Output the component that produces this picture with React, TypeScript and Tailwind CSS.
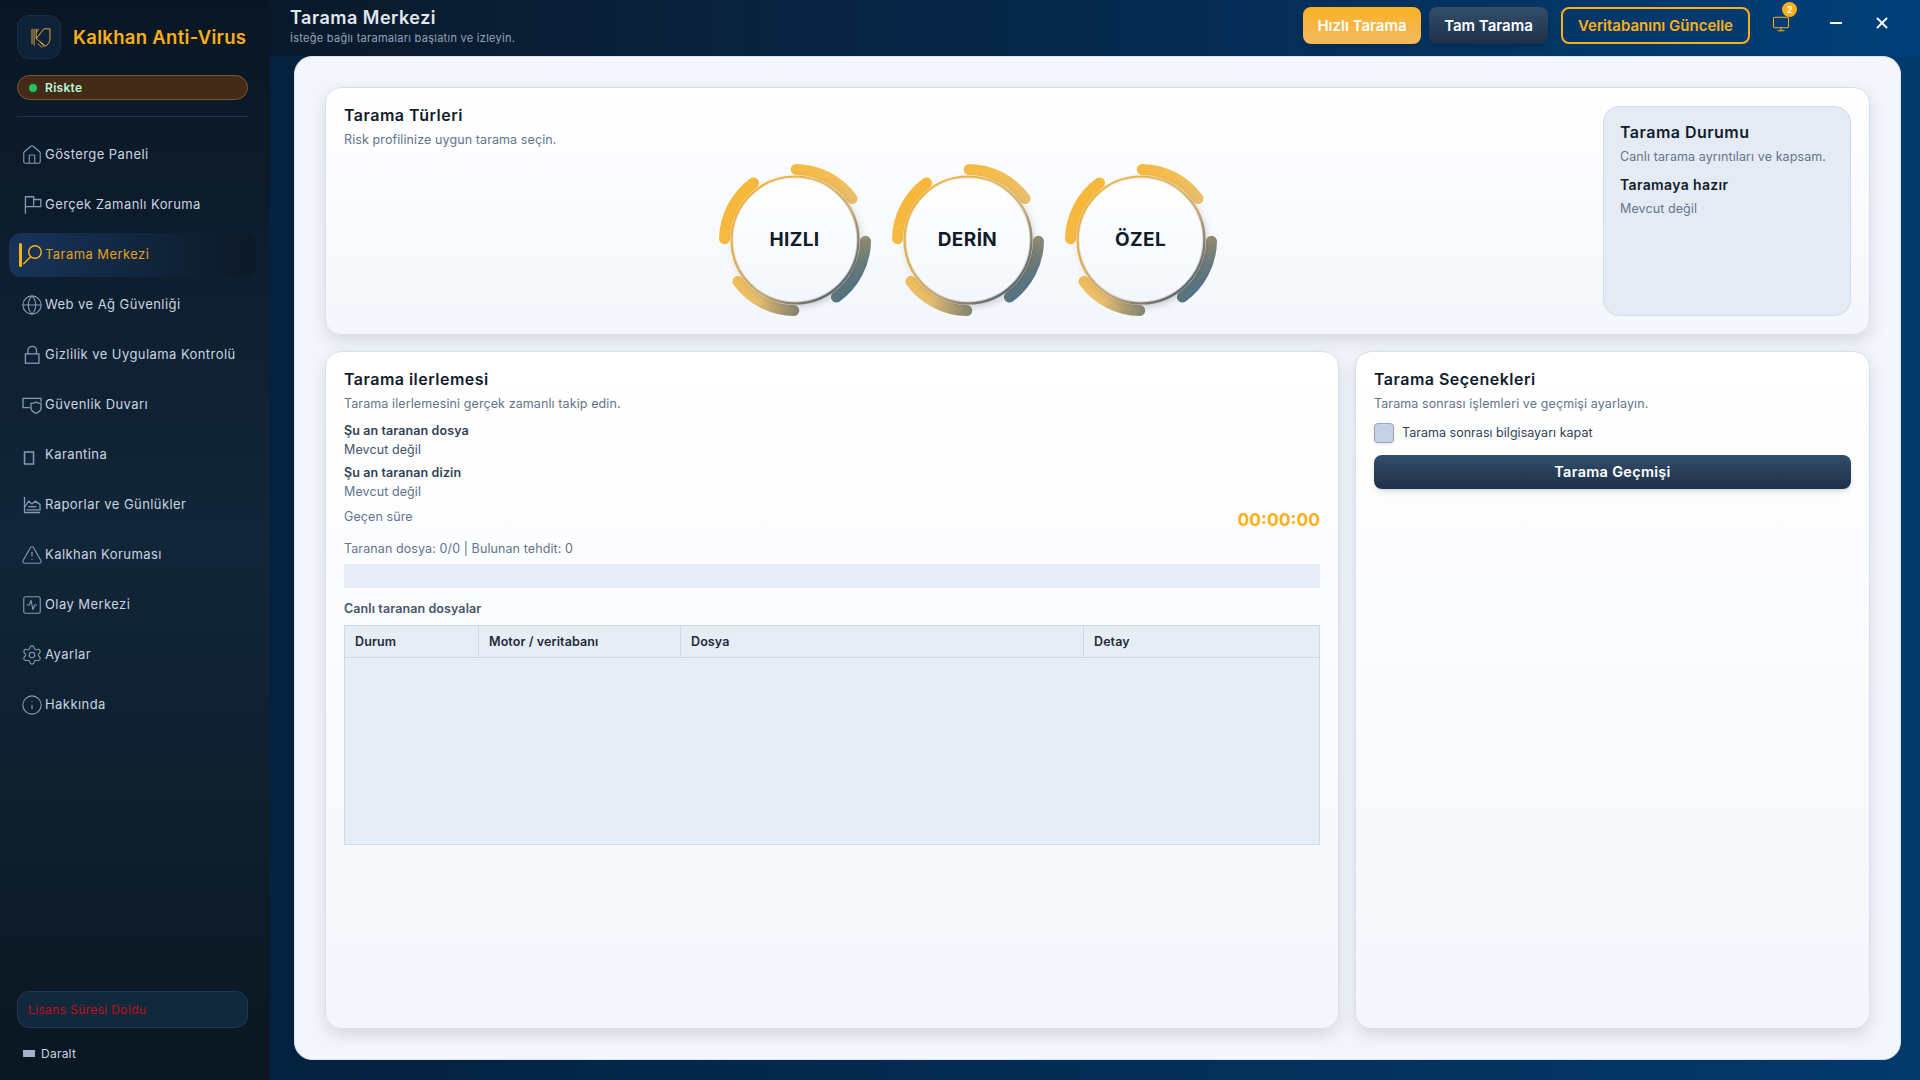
import { Globe, House, Info, Minus, Monitor, Settings, SquareActivity, TriangleAlert, X } from "lucide-react";
import type { ReactNode } from "react";

const iconClass = "size-[22px] shrink-0 text-[#8499b5]";

const FlagIcon = () => (
  <svg viewBox="0 0 20 20" fill="none" stroke="currentColor" strokeWidth="1.2" className={iconClass}>
    <path d="M4 18V2M4 2.500h7.500v9H4M11.500 5H18v6.500h-6.500" />
  </svg>
);

const LockIcon = () => (
  <svg viewBox="0 0 20 20" fill="none" stroke="currentColor" strokeWidth="1.2" className={iconClass}>
    <rect x="4" y="9" width="12.300" height="8.500" />
    <path d="M6.300 9V6a3.900 3.900 0 0 1 7.800 0v3" />
  </svg>
);

const WallIcon = () => (
  <svg viewBox="0 0 20 20" fill="none" stroke="currentColor" strokeWidth="1.2" className={iconClass}>
    <path d="M8 12.400H1.800V4h16.400v3" />
    <path d="M13.600 7.300c1.200.9 2.800 1.300 4.600 1.300v4c0 2.400-1.800 4-4.600 5-2.800-1-4.500-2.600-4.500-5v-4c1.800 0 3.300-.4 4.500-1.300z" />
  </svg>
);

const BoxIcon = () => (
  <svg viewBox="0 0 20 20" fill="none" stroke="currentColor" strokeWidth="1.4" className={iconClass}>
    <rect x="3.200" y="7.300" width="8.200" height="10.900" />
  </svg>
);

const ChartIcon = () => (
  <svg viewBox="0 0 20 20" fill="none" stroke="currentColor" strokeWidth="1.2" className={iconClass}>
    <path d="M3.200 2.700v14.100h14.100" />
    <path d="M3.200 12L7 6.500l3 2.500 3-2.500 4.300 3v5H5" />
    <path d="M6.500 11.500h7.500" />
  </svg>
);

const ActiveSearch = () => (
  <svg viewBox="0 0 20 20" fill="none" stroke="#fbb017" strokeWidth="1.3" className="size-[22px] shrink-0">
    <circle cx="12.700" cy="7.300" r="5.700" />
    <path d="M8.700 11.500L2 18.500" />
  </svg>
);

const navItems: { label: string; icon: ReactNode; active?: boolean }[] = [
  { label: "Gösterge Paneli", icon: <House strokeWidth={1.2} className={iconClass} /> },
  { label: "Gerçek Zamanlı Koruma", icon: <FlagIcon /> },
  { label: "Tarama Merkezi", icon: <ActiveSearch />, active: true },
  { label: "Web ve Ağ Güvenliği", icon: <Globe strokeWidth={1.2} className={iconClass} /> },
  { label: "Gizlilik ve Uygulama Kontrolü", icon: <LockIcon /> },
  { label: "Güvenlik Duvarı", icon: <WallIcon /> },
  { label: "Karantina", icon: <BoxIcon /> },
  { label: "Raporlar ve Günlükler", icon: <ChartIcon /> },
  { label: "Kalkhan Koruması", icon: <TriangleAlert strokeWidth={1.2} className={iconClass} /> },
  { label: "Olay Merkezi", icon: <SquareActivity strokeWidth={1.2} className={iconClass} /> },
  { label: "Ayarlar", icon: <Settings strokeWidth={1.2} className={iconClass} /> },
  { label: "Hakkında", icon: <Info strokeWidth={1.2} className={iconClass} /> },
];

const Logo = () => (
  <svg viewBox="0 0 24 24" fill="none" stroke="#fbb93f" strokeWidth="0.75" className="size-7">
    <path d="M6 5v13M7.800 5v14.500M9.600 5v8.500M9.600 13.500L16.100 5h5.300v8.500c0 2.500-1.400 4.500-3.500 6.300M9.600 13.500l8.300 6.300" />
    <path d="M11.800 5L9.600 8M13 16l3.500 4.500M11 17.500l3.500 3.500" />
  </svg>
);

const NavRow = ({ label, icon, active }: { label: string; icon: ReactNode; active?: boolean }) => (
  <div
    className={
      active
        ? "flex h-11 items-center rounded-xl bg-gradient-to-r from-[#17345a] to-[#0c1926] pl-[10px] text-[#e4a11c]"
        : "flex h-11 items-center rounded-xl pl-3 text-[#cbd5e1]"
    }
  >
    {active && <span className="-mr-px h-6 w-[3px] rounded-sm bg-[#fbb017]" />}
    {icon}
    <span className="ml-[2px] text-[13px] tracking-[0.033em]">{label}</span>
  </div>
);

const Sidebar = () => (
  <aside className="flex w-[270px] shrink-0 flex-col bg-gradient-to-b from-[#0a1624] via-[#112639] to-[#0b1722] pr-[14px] pl-[9px]">
    <div className="mx-2 mt-[15px] flex items-center gap-3">
      <div className="flex size-11 items-center justify-center rounded-xl border border-[#173049] bg-[#0e2338]">
        <Logo />
      </div>
      <span className="text-[18.500px] leading-none font-semibold tracking-[0.016em] whitespace-nowrap text-[#fbb017]">Kalkhan Anti-Virus</span>
    </div>
    <div className="mx-2 mt-4 flex h-[25px] items-center rounded-full border border-[#7a5a35] bg-[#432b18] pl-[11px]">
      <span className="size-2 rounded-full bg-[#22c55e]" />
      <span className="ml-2 text-xs font-semibold tracking-[0.025em] text-[#bbf7d0]">Riskte</span>
    </div>
    <div className="mx-2 mt-4 h-px bg-[#1c3550]" />
    <nav className="mt-4 flex flex-col gap-[6px]">
      {navItems.map((item) => (
        <NavRow key={item.label} {...item} />
      ))}
    </nav>
    <div className="mx-2 mt-auto flex h-[37px] items-center rounded-xl border border-[#1e3a55] bg-[#11283d] pl-[10px] text-xs tracking-[0.03em] text-[#c00d1a]">
      Lisans Süresi Doldu
    </div>
    <div className="mx-[14px] mt-[17px] mb-[18px] flex h-[17px] items-center gap-[6px] text-xs tracking-[0.02em] text-[#cbd5e1]">
      <span className="h-[7px] w-3 bg-[#9fb3cd]" />
      Daralt
    </div>
  </aside>
);

const Header = () => (
  <header className="flex h-14 shrink-0 items-start bg-gradient-to-r from-[#0a1929] via-[#06294e] to-[#00407a] pt-[7px] pr-[29px] pl-5">
    <div className="flex-1">
      <h1 className="text-lg leading-[22px] font-semibold tracking-[0.028em] text-[#e2e8f0]">Tarama Merkezi</h1>
      <p className="mt-[2px] text-[11px] leading-[14px] tracking-[0.025em] text-[#94a3b8]">İsteğe bağlı taramaları başlatın ve izleyin.</p>
    </div>
    <button className="h-[37px] w-[118px] rounded-lg bg-gradient-to-b from-[#fbb11f] to-[#f2b95c] pt-[2px] text-[15px] font-semibold text-white shadow-md">Hızlı Tarama</button>
    <button className="ml-2 h-[37px] w-[119px] rounded-lg bg-gradient-to-b from-[#334e6b] to-[#1e3048] pt-[2px] text-[15px] font-semibold text-white shadow-md">Tam Tarama</button>
    <button className="ml-[13px] h-[37px] w-[189px] rounded-lg border-2 border-[#fbb017] pt-[2px] text-[15px] font-semibold text-[#fbb017]">Veritabanını Güncelle</button>
    <div className="relative mt-[7px] ml-[21px] flex size-5 items-center justify-center">
      <Monitor strokeWidth={1.4} className="size-[18px] text-[#fbb017]" />
      <span className="absolute -top-[12px] -right-[6px] flex size-[15px] items-center justify-center rounded-full bg-[#fbb017] text-[9px] font-bold text-white">2</span>
    </div>
    <Minus strokeWidth={2.4} className="mt-[7px] ml-[36px] size-[18px] text-white" />
    <X strokeWidth={2.4} className="mt-[7px] ml-[28px] size-[18px] text-white" />
  </header>
);

// four arc segments around the scan button, 53deg long with 37deg gaps
const arcPath = (from: number, to: number) => {
  const r = 70.5;
  const pt = (a: number) => {
    const rad = (a * Math.PI) / 180;
    return `${80 + r * Math.sin(rad)} ${80 - r * Math.cos(rad)}`;
  };
  return `M${pt(from)}A${r} ${r} 0 0 1 ${pt(to)}`;
};

const ScanDial = ({ label }: { label: string }) => {
  const id = `dial-${label}`;
  return (
    <div className="relative flex size-[160px] items-center justify-center">
      <svg viewBox="0 0 160 160" className="absolute inset-0 size-full" fill="none">
        <defs>
          <linearGradient id={id} gradientUnits="userSpaceOnUse" x1="20" y1="20" x2="140" y2="140">
            <stop offset="0" stopColor="#f7b733" />
            <stop offset="0.35" stopColor="#f4bc50" />
            <stop offset="0.6" stopColor="#e8bf70" />
            <stop offset="0.8" stopColor="#8d8a72" />
            <stop offset="0.95" stopColor="#4d7186" />
          </linearGradient>
          <linearGradient id={`${id}-disc`} x1="0" y1="0" x2="0" y2="1">
            <stop offset="0" stopColor="#ffffff" />
            <stop offset="1" stopColor="#f3f6fb" />
          </linearGradient>
        </defs>
        {[0, 90, 180, 270].map((a) => (
          <path key={a} d={arcPath(a + 1, a + 54)} stroke={`url(#${id})`} strokeWidth="11" strokeLinecap="round" />
        ))}
        <circle cx="80" cy="80" r="63.500" stroke={`url(#${id})`} strokeWidth="2.200" />
        <circle cx="80" cy="80" r="61.500" fill={`url(#${id}-disc)`} className="drop-shadow-[2px_3px_5px_rgba(30,41,59,0.35)]" />
      </svg>
      <span className="relative text-[19px] font-bold tracking-[0.02em] text-[#111c2b]">{label}</span>
    </div>
  );
};

const cardClass = "rounded-2xl border border-[#d7dfea] bg-gradient-to-b from-white to-[#f3f6fb] shadow-[0_6px_16px_rgba(100,116,139,0.22)]";
const smallText = "text-[12.500px] leading-[16px] tracking-[0.008em]";

const CardHead = ({ title, sub }: { title: string; sub: string }) => (
  <>
    <h2 className="text-base leading-[22px] font-semibold tracking-[0.03em] text-[#111c2b]">{title}</h2>
    <p className={`mt-[6px] ${smallText} text-[#64748b]`}>{sub}</p>
  </>
);

const ScanTypes = () => (
  <section className={`${cardClass} flex h-[248px] shrink-0 p-[18px]`}>
    <div className="-mt-[2px] flex min-w-0 flex-1 flex-col pr-3">
      <CardHead title="Tarama Türleri" sub="Risk profilinize uygun tarama seçin." />
      <div className="mt-3 flex justify-center gap-[13px]">
        <ScanDial label="HIZLI" />
        <ScanDial label="DERİN" />
        <ScanDial label="ÖZEL" />
      </div>
    </div>
    <div className="w-[248px] shrink-0 rounded-2xl border border-[#d3dcea] bg-[#e5ebf4] px-4 pt-[14px]">
      <h3 className="text-base leading-[22px] font-semibold tracking-[0.03em] text-[#111c2b]">Tarama Durumu</h3>
      <p className={`mt-[6px] ${smallText} text-[#64748b]`}>Canlı tarama ayrıntıları ve kapsam.</p>
      <p className="mt-[11px] text-sm leading-[18px] font-semibold tracking-[0.025em] text-[#111c2b]">Taramaya hazır</p>
      <p className={`mt-[7px] ${smallText} text-[#64748b]`}>Mevcut değil</p>
    </div>
  </section>
);

const Field = ({ label, value, tone }: { label: string; value: string; tone: string }) => (
  <div>
    <p className={`${smallText} font-semibold text-[#334155]`}>{label}</p>
    <p className={`mt-[3px] ${smallText} ${tone}`}>{value}</p>
  </div>
);

const Progress = () => (
  <section className={`${cardClass} flex-1 px-[18px] pt-4 pb-[18px]`}>
    <CardHead title="Tarama ilerlemesi" sub="Tarama ilerlemesini gerçek zamanlı takip edin." />
    <div className="mt-[11px] flex flex-col gap-[7px]">
      <Field label="Şu an taranan dosya" value="Mevcut değil" tone="text-[#475569]" />
      <Field label="Şu an taranan dizin" value="Mevcut değil" tone="text-[#64748b]" />
    </div>
    <div className="mt-2 flex items-start justify-between">
      <span className={`${smallText} leading-[18px] text-[#64748b]`}>Geçen süre</span>
      <span className="text-[17.500px] leading-[24px] font-bold text-[#fbb017]">00:00:00</span>
    </div>
    <p className={`mt-[9px] ${smallText} text-[#64748b]`}>Taranan dosya: 0/0 | Bulunan tehdit: 0</p>
    <div className="mt-[7px] h-6 bg-[#e7edf5]" />
    <p className={`mt-[13px] ${smallText} font-semibold text-[#475569]`}>Canlı taranan dosyalar</p>
    <div className="mt-2 h-[220px] border border-[#cfd8e4] bg-[#e7edf5]">
      <div className={`grid h-8 grid-cols-[134px_202px_403px_1fr] border-b border-[#cfd8e4] ${smallText} font-semibold text-[#1e293b]`}>
        {["Durum", "Motor / veritabanı", "Dosya", "Detay"].map((h, i) => (
          <div key={h} className={i < 3 ? "flex items-center border-r border-[#cfd8e4] pl-[10px]" : "flex items-center pl-[10px]"}>
            {h}
          </div>
        ))}
      </div>
    </div>
  </section>
);

const Options = () => (
  <section className={`${cardClass} w-[515px] shrink-0 px-[18px] pt-4 pb-[18px]`}>
    <CardHead title="Tarama Seçenekleri" sub="Tarama sonrası işlemleri ve geçmişi ayarlayın." />
    <label className="mt-[11px] flex items-center gap-2">
      <span className="size-5 rounded border border-[#9aa7b8] bg-[#c4d2e3] shadow-sm" />
      <span className="text-[12.500px] tracking-[0.002em] text-[#334155]">Tarama sonrası bilgisayarı kapat</span>
    </label>
    <button className="mt-3 h-[34px] w-full rounded-lg bg-gradient-to-b from-[#334e6b] to-[#1e3048] text-[14.500px] font-semibold tracking-[0.02em] text-white shadow-md">
      Tarama Geçmişi
    </button>
  </section>
);

export default function App() {
  return (
    <div className="flex h-[1080px] w-[1920px] overflow-hidden font-[family-name:Inter,sans-serif]">
      <Sidebar />
      <div className="flex min-w-0 flex-1 flex-col bg-gradient-to-r from-[#04213f] to-[#023a6c]">
        <Header />
        <main className="flex min-h-0 flex-1 flex-col pr-[19px] pb-5 pl-6">
          <div className="flex h-full flex-col gap-4 rounded-[18px] border border-[#dbe4f0] bg-[#f3f6fb] px-[30px] pt-[30px] pb-[30px]">
            <ScanTypes />
            <div className="flex min-h-0 flex-1 gap-4">
              <Progress />
              <Options />
            </div>
          </div>
        </main>
      </div>
    </div>
  );
}
